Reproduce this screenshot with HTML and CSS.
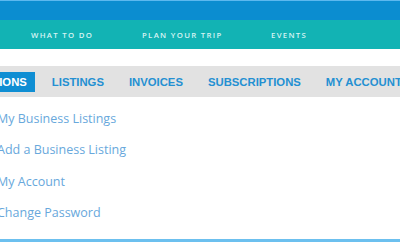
FILE: index.html
```html
<!DOCTYPE html>
<html>
<head>
<meta charset="utf-8">
<link rel="stylesheet" href="styles.css">
</head>
<body>
<div class="topbar"></div>
<nav class="mainnav">
  <a class="navlink">WHAT TO DO</a>
  <a class="navlink">PLAN YOUR TRIP</a>
  <a class="navlink">EVENTS</a>
</nav>
<div class="tabs">
  <a class="tab active">OPTIONS</a>
  <a class="tab">LISTINGS</a>
  <a class="tab">INVOICES</a>
  <a class="tab">SUBSCRIPTIONS</a>
  <a class="tab">MY ACCOUNT</a>
</div>
<ul class="menu">
  <li>My Business Listings</li>
  <li>Add a Business Listing</li>
  <li>My Account</li>
  <li>Change Password</li>
</ul>
<div class="footerline"></div>
</body>
</html>
```

FILE: styles.css
```css
html, body {
  margin: 0;
  padding: 0;
  background: #ffffff;
  width: 400px;
  height: 242px;
  overflow: hidden;
}
body {
  display: flex;
  flex-direction: column;
}
.topbar {
  height: 19px;
  background: #0b8dd0;
  border-top: 1px solid #5cb8ef;
}
.mainnav {
  height: 29px;
  background: #12b3b4;
  display: flex;
  align-items: center;
  padding-left: 31px;
}
.navlink {
  font-family: "Open Sans", sans-serif;
  font-weight: 600;
  font-size: 7.8px;
  letter-spacing: 1.3px;
  color: #d6f3f3;
  white-space: nowrap;
}
.navlink:nth-child(1) { width: 111px; }
.navlink:nth-child(2) { width: 129px; }
.tabs {
  margin-top: 17px;
  height: 31px;
  background: #e2e2e2;
  display: flex;
  align-items: center;
  gap: 9px;
  margin-left: -32px;
  white-space: nowrap;
}
.tab {
  font-family: "Liberation Sans", Arial, sans-serif;
  font-weight: 700;
  font-size: 11.3px;
  color: #2490d2;
  padding: 0 8px;
  height: 20px;
  display: flex;
  align-items: center;
  flex-shrink: 0;
}
.tab.active {
  background: #0f8ed3;
  color: #ffffff;
}
.menu {
  list-style: none;
  margin: 6px 0 0 -3px;
  padding: 0;
  display: flex;
  flex-direction: column;
}
.menu li {
  font-family: "Open Sans", sans-serif;
  font-size: 12.5px;
  color: #68a8dc;
  height: 31.3px;
  line-height: 31.3px;
  white-space: nowrap;
}
.footerline {
  margin-top: auto;
  height: 3px;
  background: #6cc0ef;
}
```
